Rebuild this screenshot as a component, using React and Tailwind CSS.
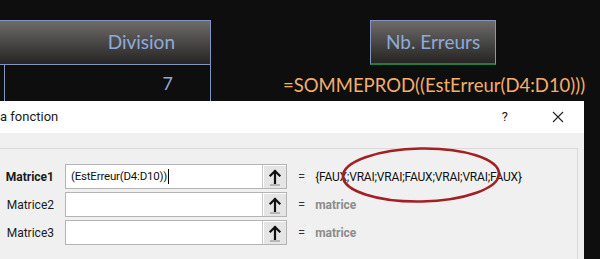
const calibri = { fontFamily: "Lato, 'Liberation Sans', sans-serif" };

function ArrowButton() {
  return (
    <span className="flex h-full w-[24px] items-center justify-center border-l border-[#c8c8c8] bg-[#e5e5e5] shadow-[inset_1px_1px_0_#ffffff]">
      <svg width="14" height="18" viewBox="0 0 14 18" aria-hidden="true">
        <path d="M7 15V3M2.5 7.5L7 3l4.5 4.5" fill="none" stroke="#111" strokeWidth="2.2" strokeLinecap="square" />
        <path d="M2 17h10" stroke="#888" strokeWidth="1" />
      </svg>
    </span>
  );
}

function ArgRow({ label, bold, value, result, empty }) {
  return (
    <div className="flex h-[25px] items-center">
      <span className={`w-[54px] text-right text-[12px] text-[#1a1a1a] ${bold ? "font-bold" : ""}`}>{label}</span>
      <div className="ml-[11px] flex h-full w-[222px] border border-[#b4b4b4] bg-white">
        <span className="flex flex-1 items-center pl-[5px] text-[11.5px] tracking-[-0.2px] text-[#111]">
          {value}
          {value ? <span className="ml-px inline-block h-[15px] w-px bg-black" /> : null}
        </span>
        <ArrowButton />
      </div>
      <span className="ml-[11px] text-[13px] text-[#333]">=</span>
      <span className={`ml-[10px] text-[12px] ${empty ? "font-bold text-[#8c8c8c]" : "tracking-[-0.2px] text-[#111]"}`}>{result}</span>
    </div>
  );
}

export default function App() {
  return (
    <div className="relative h-[259px] w-[600px] overflow-hidden bg-[#0e0e0e]" style={{ fontFamily: "Roboto, 'Noto Sans', sans-serif" }}>
      <div className="h-[101px] pt-[20px]" style={calibri}>
        <div className="flex">
          <div className="w-[211px]">
            <div className="flex h-[45px] items-center justify-end border border-l-0 border-[#8197c0] bg-gradient-to-b from-[#6e6b69] via-[#4a4847] to-[#262524] pr-[35px] text-[19px] text-[#8eaadb]">
              Division
            </div>
            <div className="ml-[4px] flex h-[36px] items-center justify-end border-x border-[#8197c0] pr-[37px] text-[18px] text-[#8eaadb]">
              7
            </div>
          </div>
          <div className="ml-[72px] flex flex-col">
            <div className="ml-[87px] flex h-[45px] w-[126px] items-center justify-center border border-b-2 border-[#8197c0] border-b-[#1f7a45] bg-gradient-to-b from-[#6e6b69] via-[#4a4847] to-[#262524] text-[19px] text-[#8eaadb]">
              Nb. Erreurs
            </div>
            <div className="mt-[9px] text-[18.5px] leading-[22px] text-[#f4ad6d]">=SOMMEPROD((EstErreur(D4:D10)))</div>
          </div>
        </div>
      </div>

      <div className="flex h-[158px]">
        <div className="flex w-[584px] flex-col bg-[#f0f0f0]">
          <div className="flex h-[32px] items-center bg-white text-[13px] text-[#1a1a1a]">
            <span className="flex-1">a fonction</span>
            <span className="mr-[44px] text-[13px]">?</span>
            <svg className="mr-[20px]" width="12" height="12" viewBox="0 0 12 12" aria-hidden="true">
              <path d="M1 1l10 10M11 1L1 11" stroke="#222" strokeWidth="1.1" />
            </svg>
          </div>
          <div className="mt-[15px] flex w-[578px] flex-1 flex-col gap-[3px] border-t border-r border-[#dadada] pt-[15px]">
            <ArgRow label="Matrice1" bold value="(EstErreur(D4:D10))" result="{FAUX;VRAI;VRAI;FAUX;VRAI;VRAI;FAUX}" />
            <ArgRow label="Matrice2" result="matrice" empty />
            <ArgRow label="Matrice3" result="matrice" empty />
          </div>
        </div>
      </div>

      <svg className="pointer-events-none absolute left-0 top-0" width="600" height="259" aria-hidden="true">
        <ellipse cx="421" cy="175" rx="78" ry="26.5" fill="none" stroke="#a31f24" strokeWidth="2.6" transform="rotate(-1 421 175)" />
      </svg>
    </div>
  );
}
